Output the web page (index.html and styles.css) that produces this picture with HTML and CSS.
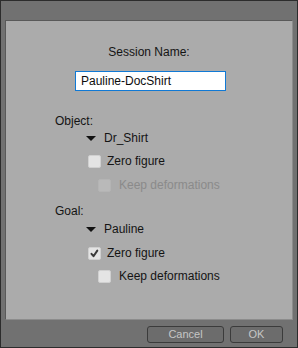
FILE: index.html
```html
<!DOCTYPE html>
<html>
<head>
<meta charset="utf-8">
<link rel="stylesheet" href="styles.css">
</head>
<body>
<div class="dialog">
  <div class="panel">
    <div class="title">Session Name:</div>
    <div class="input-wrap"><div class="input">Pauline-DocShirt</div></div>
    <div class="section">Object:</div>
    <div class="tree"><span class="tri"></span><span>Dr_Shirt</span></div>
    <div class="check c1 r1"><span class="box"></span><span>Zero figure</span></div>
    <div class="check c2 r2 disabled"><span class="box"></span><span>Keep deformations</span></div>
    <div class="section s2">Goal:</div>
    <div class="tree t2"><span class="tri"></span><span>Pauline</span></div>
    <div class="check c1 r3"><span class="box checked"><svg width="13" height="13" viewBox="0 0 13 13"><path d="M3.5 6.8 L5.5 9.2 L9.3 3.6" fill="none" stroke="#3a3a3a" stroke-width="2" stroke-linecap="round" stroke-linejoin="round"/></svg></span><span>Zero figure</span></div>
    <div class="check c2 r4"><span class="box"></span><span>Keep deformations</span></div>
  </div>
  <div class="footer">
    <div class="btn cancel">Cancel</div>
    <div class="btn ok">OK</div>
  </div>
</div>
</body>
</html>
```
FILE: styles.css
```css
html, body {
  margin: 0;
  padding: 0;
  background: #6f6f6f;
}
.dialog {
  width: 298px;
  height: 348px;
  box-sizing: border-box;
  border: 1px solid #2c2c2c;
  background: #717171;
  display: flex;
  flex-direction: column;
  font-family: "Liberation Sans", Arial, sans-serif;
  font-size: 12px;
  color: #141414;
}
.panel {
  margin: 19px 4px 0 4px;
  height: 300px;
  box-sizing: border-box;
  background: #ababab;
  border: 1px solid;
  border-color: #595959 #8c8c8c #8c8c8c #595959;
  display: flex;
  flex-direction: column;
  padding-left: 49px;
}
.title {
  margin-top: 24px;
  margin-left: -49px;
  line-height: 14px;
  text-align: center;
}
.input-wrap {
  margin-top: 12px;
  margin-left: 20px;
}
.input {
  width: 151px;
  height: 20px;
  box-sizing: border-box;
  border: 1px solid #1079d5;
  background: #fff;
  line-height: 18px;
  padding-left: 5px;
  color: #0c0c0c;
  font-size: 12px;
}
.section {
  margin-top: 23px;
  line-height: 14px;
}
.s2 {
  margin-top: 12px;
}
.tree {
  margin-top: 3px;
  margin-left: 31px;
  line-height: 14px;
  display: flex;
  align-items: center;
  gap: 8px;
}
.t2 { margin-top: 4px; }
.tri {
  width: 0;
  height: 0;
  border-left: 5px solid transparent;
  border-right: 5px solid transparent;
  border-top: 5px solid #111;
  margin-top: 1px;
}
.check {
  display: flex;
  align-items: center;
  gap: 6px;
  height: 14px;
  line-height: 14px;
}
.c1 { margin-left: 33px; }
.c2 { margin-left: 43px; gap: 8px; }
.r1 { margin-top: 9px; }
.r2 { margin-top: 10px; }
.r3 { margin-top: 10px; }
.r4 { margin-top: 9px; }
.box {
  width: 13px;
  height: 13px;
  box-sizing: border-box;
  border-radius: 2px;
  background: #e4e4e4;
  border: 1px solid #d0d0d0;
  flex: none;
  display: flex;
}
.box svg { margin: -1px; }
.disabled { color: #8a8a8a; }
.disabled .box {
  background: #b9b9b9;
  border-color: #b4b4b4;
}
.footer {
  display: flex;
  justify-content: flex-end;
  gap: 6px;
  padding: 6px 14px 0 0;
}
.btn {
  height: 17px;
  box-sizing: border-box;
  border: 1px solid #3b3b3b;
  border-radius: 3px;
  background: #6c6c6c;
  color: #c6c6c6;
  font-size: 11px;
  line-height: 15px;
  text-align: center;
}
.cancel { width: 77px; }
.ok { width: 53px; }
```
